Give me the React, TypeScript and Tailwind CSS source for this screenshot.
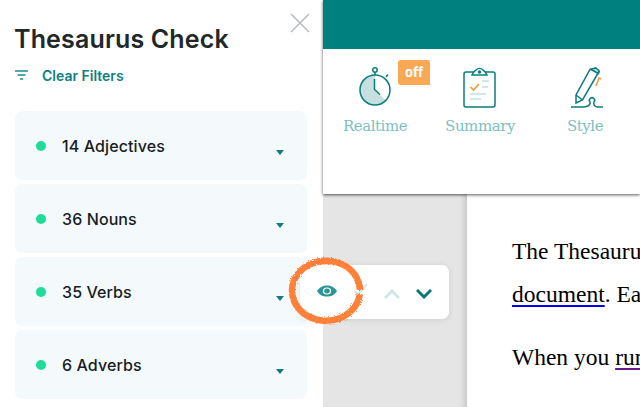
const cards = ["14 Adjectives", "36 Nouns", "35 Verbs", "6 Adverbs"];

function Stopwatch() {
  return (
    <svg className="ml-[3px]" width="36" height="42" viewBox="0 0 36 42" fill="none" stroke="#0b7c7c" strokeWidth="1.5">
      <path d="M16 23 L27 33.500 A15 15 0 0 1 16 38 A15 15 0 0 1 16 8 Z" fill="#c6e0e1" stroke="none" />
      <circle cx="16" cy="23" r="15" />
      <circle cx="16" cy="3" r="2.2" />
      <path d="M16 5.500V8M27 10l2-2.500M15.500 12v10.500l5.500 5" />
    </svg>
  );
}

function Clipboard() {
  return (
    <svg width="34" height="42" viewBox="0 0 34 42" fill="none" stroke="#0b7c7c" strokeWidth="1.5">
      <rect x="1" y="5" width="31" height="35" rx="2" />
      <path d="M9 8C10 5 12 4 13 3C15 1 18 1 20 3C21 4 23 5 24 8Z" fill="#fff" />
      <circle cx="16.5" cy="5" r="1" fill="#0b7c7c" />
      <path d="M7.500 20l3 3 5.500-6" stroke="#f59a3c" strokeWidth="1.700" />
      <path d="M19 14h7M19 20h6M7 27h16M7 32h11" stroke="#c6e0e1" strokeWidth="1.700" />
    </svg>
  );
}

function Pen() {
  return (
    <svg className="ml-[3px]" width="34" height="42" viewBox="0 0 34 42" fill="none" stroke="#0b7c7c" strokeWidth="1.500">
      <path d="M6 36V28L20 2.500 26 1l3 3.500L12.500 33Z" />
      <path d="M21 2.500L28.500 6.500L29 3.500 25.500 1Z" fill="#c6e0e1" />
      <path d="M6 28l6.500 5" />
      <path d="M26 19l3-8 2 1" stroke="#f59a3c" />
      <path d="M1 40h11c4 0 9-1 8-5a2.600 2.600 0 1 1 4 0c-1 3 1 5 4 5h5" />
    </svg>
  );
}

function Tool({ label, icon, w }: { label: string; icon: React.ReactNode; w: string }) {
  return (
    <div className={`flex flex-col items-center ${w}`}>
      <div className="h-[42px] flex items-start justify-center">{icon}</div>
      <span className="mt-[8px] text-[15px] leading-[18px] text-[#7cc0c0] font-['DejaVu_Serif',serif] tracking-[-0.45px]">{label}</span>
    </div>
  );
}

function Sidebar() {
  return (
    <aside className="relative w-[323px] shrink-0 bg-white pl-[15px] pr-[16px] font-['Inter',sans-serif]">
      <svg className="absolute left-[290px] top-[13px]" width="20" height="20" viewBox="0 0 20 20" stroke="#b5bcc0" strokeWidth="1.500">
        <path d="M1 1l18 18M19 1L1 19" />
      </svg>
      <h1 className="-ml-[1px] pt-[22px] text-[25px] leading-[34px] font-semibold text-[#21282a] tracking-[0.15px]">Thesaurus Check</h1>
      <div className="mt-[9px] flex items-center h-[20px] text-[#0f7f80]">
        <svg width="13" height="10" viewBox="0 0 13 10" stroke="#1b8a8c" strokeWidth="1.300">
          <path d="M0 1h13M2.500 5h8M5 9h3" />
        </svg>
        <span className="ml-[14px] text-[14px] font-semibold">Clear Filters</span>
      </div>
      <div className="mt-[26px] flex flex-col gap-[4px]">
        {cards.map((c) => (
          <div key={c} className="relative h-[69px] rounded-[7px] bg-[#f4fafb] flex items-start pl-[21px] pt-[24px]">
            <span className="mt-[6px] w-[10px] h-[10px] rounded-full bg-[#1fdc9b] shrink-0" />
            <span className="ml-[16px] text-[16px] leading-[22px] font-medium text-[#171d1f] tracking-[0.1px]">{c}</span>
            <span className="absolute left-[261px] top-[39px] w-0 h-0 border-x-[4.500px] border-x-transparent border-t-[5px] border-t-[#137a80]" />
          </div>
        ))}
      </div>
    </aside>
  );
}

function Toolbar() {
  return (
    <div className="relative z-10 h-[194px] shrink-0 bg-white shadow-[0_1px_3px_rgba(0,0,0,0.65)]">
      <div className="h-[49px] bg-[#018080]" />
      <div className="flex pt-[18px]">
        <div className="relative ml-[7px]">
          <Tool label="Realtime" icon={<Stopwatch />} w="w-[90px]" />
          <span className="absolute left-[68px] top-[-7px] w-[32px] h-[25px] rounded-[3px] rounded-br-none bg-[#fba855] text-white text-[14px] leading-[24px] font-bold text-center font-['Roboto',sans-serif]">off</span>
        </div>
        <div className="ml-[15px]"><Tool label="Summary" icon={<Clipboard />} w="w-[90px]" /></div>
        <div className="ml-[15px]"><Tool label="Style" icon={<Pen />} w="w-[90px]" /></div>
      </div>
    </div>
  );
}

function Doc() {
  return (
    <div className="flex-1 flex min-h-0">
      <div className="w-[144px] bg-[#e5e5e5] shrink-0 shadow-[inset_-6px_0_5px_-3px_rgba(0,0,0,0.12)]" />
      <div className="flex-1 min-w-0 bg-white overflow-hidden pl-[45px] pt-[36px] font-['Liberation_Serif',serif] text-[23.5px] text-black whitespace-nowrap">
        <p className="leading-[43px]">The Thesaurus</p>
        <p className="leading-[43px]"><span className="underline decoration-[#0000ee] decoration-2 underline-offset-[3px]">document</span>. Each</p>
        <p className="mt-[20px] leading-[43px]">When you <span className="underline decoration-[#6a1b8a] decoration-2 underline-offset-[3px]">run</span></p>
      </div>
    </div>
  );
}

function ActionBar() {
  return (
    <div className="absolute left-[300px] top-[265px] z-20 w-[149px] h-[54px] rounded-[7px] bg-white shadow-[0_1px_6px_rgba(0,0,0,0.1)]">
      <svg className="absolute left-[17px] top-[20px]" width="20" height="12" viewBox="0 0 20 14" preserveAspectRatio="none">
        <path d="M0 7C3 2 6 .5 10 .5S17 2 20 7C17 12 14 13.500 10 13.500S3 12 0 7Z" fill="#2a9496" />
        <circle cx="10" cy="7" r="4.200" fill="#fff" />
        <circle cx="10" cy="7" r="2.800" fill="#2a9496" />
      </svg>
      <svg className="absolute left-[53px] top-[18px]" width="15" height="12" viewBox="0 0 15 12" fill="none" stroke="#d2e8e8" strokeWidth="2">
        <path d="M1 8l4 3L14 1" />
      </svg>
      <svg className="absolute left-[84px] top-[24px]" width="16" height="10" viewBox="0 0 16 10" fill="none" stroke="#cfe6e6" strokeWidth="3">
        <path d="M1 9l7-7 7 7" />
      </svg>
      <svg className="absolute left-[116px] top-[24px]" width="16" height="10" viewBox="0 0 16 10" fill="none" stroke="#0b7778" strokeWidth="3">
        <path d="M1 1l7 7 7-7" />
      </svg>
      <svg className="absolute left-[-14px] top-[-9px]" width="84" height="72" viewBox="0 0 84 72" fill="none" stroke="#ff8038" strokeWidth="6.500">
        <filter id="rough" x="-10%" y="-10%" width="120%" height="120%">
          <feTurbulence type="fractalNoise" baseFrequency="0.7" numOctaves="2" seed="3" />
          <feDisplacementMap in="SourceGraphic" scale="3" />
        </filter>
        <path filter="url(#rough)" d="M74 34 A34 30 0 1 0 73.800 38" />
      </svg>
    </div>
  );
}

export default function App() {
  return (
    <div className="relative w-[640px] h-[407px] overflow-hidden flex bg-white">
      <Sidebar />
      <div className="flex-1 min-w-0 flex flex-col">
        <Toolbar />
        <Doc />
      </div>
      <ActionBar />
    </div>
  );
}
